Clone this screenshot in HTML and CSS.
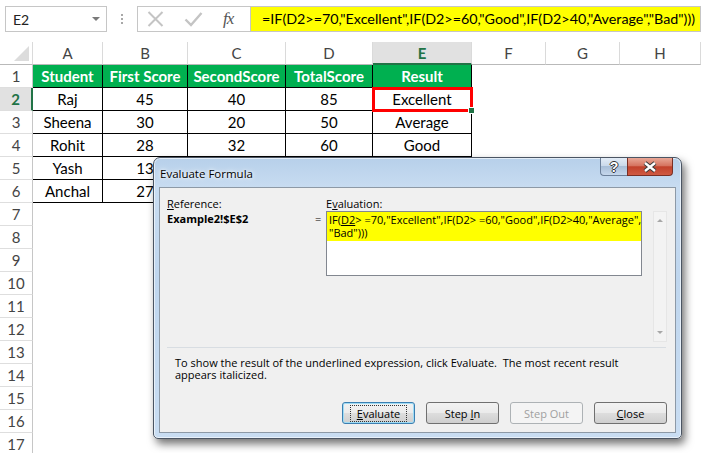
FILE: index.html
```html
<!DOCTYPE html>
<html>
  <head>
    <meta charset="utf-8" />
    <title>Evaluate Formula</title>
    <link rel="stylesheet" href="styles.css">
  </head>
  <body>
    <div id="formulaBar">
      <div class="name-box"><span>E2</span><span class="caret"></span></div>
      <div class="grip"><i></i><i></i><i></i></div>
      <div class="fx-buttons">
        <svg class="cancel" width="17" height="16" viewBox="0 0 17 16"><path d="M1.5 1 L15.5 15 M15.5 1 L1.5 15" stroke="#c4c4c4" stroke-width="2" fill="none"/></svg>
        <svg class="enter" width="19" height="16" viewBox="0 0 19 16"><path d="M1.5 8.5 L7 14 L17.5 2" stroke="#c4c4c4" stroke-width="2.4" fill="none"/></svg>
        <span class="fx">fx</span>
      </div>
      <div class="formula">=IF(D2&gt;=70,"Excellent",IF(D2&gt;=60,"Good",IF(D2&gt;40,"Average","Bad")))</div>
    </div>

    <div id="sheet">
      <div class="corner"><span></span></div>
      <div class="col-head">A</div>
      <div class="col-head">B</div>
      <div class="col-head">C</div>
      <div class="col-head">D</div>
      <div class="col-head active">E</div>
      <div class="col-head">F</div>
      <div class="col-head">G</div>
      <div class="col-head">H</div>

      <div class="row-head">1</div>
      <div class="cell head-cell">Student</div>
      <div class="cell head-cell">First Score</div>
      <div class="cell head-cell">SecondScore</div>
      <div class="cell head-cell">TotalScore</div>
      <div class="cell head-cell">Result</div>
      <div class="rest"></div>

      <div class="row-head active">2</div>
      <div class="cell">Raj</div>
      <div class="cell">45</div>
      <div class="cell">40</div>
      <div class="cell">85</div>
      <div class="cell selected">Excellent</div>
      <div class="rest"></div>

      <div class="row-head">3</div>
      <div class="cell">Sheena</div>
      <div class="cell">30</div>
      <div class="cell">20</div>
      <div class="cell">50</div>
      <div class="cell">Average</div>
      <div class="rest"></div>

      <div class="row-head">4</div>
      <div class="cell">Rohit</div>
      <div class="cell">28</div>
      <div class="cell">32</div>
      <div class="cell">60</div>
      <div class="cell">Good</div>
      <div class="rest"></div>

      <!-- C5:E6 sit under the dialog -->
      <div class="row-head">5</div>
      <div class="cell">Yash</div>
      <div class="cell">13</div>
      <div class="cell"></div>
      <div class="cell"></div>
      <div class="cell"></div>
      <div class="rest"></div>

      <div class="row-head">6</div>
      <div class="cell">Anchal</div>
      <div class="cell">27</div>
      <div class="cell"></div>
      <div class="cell"></div>
      <div class="cell"></div>
      <div class="rest"></div>

      <div class="row-head">7</div><div class="empty"></div>
      <div class="row-head">8</div><div class="empty"></div>
      <div class="row-head">9</div><div class="empty"></div>
      <div class="row-head">10</div><div class="empty"></div>
      <div class="row-head">11</div><div class="empty"></div>
      <div class="row-head">12</div><div class="empty"></div>
      <div class="row-head">13</div><div class="empty"></div>
      <div class="row-head">14</div><div class="empty"></div>
      <div class="row-head">15</div><div class="empty"></div>
      <div class="row-head">16</div><div class="empty"></div>
      <div class="row-head">17</div><div class="empty"></div>
    </div>

    <div id="evalDialog">
      <div class="title-bar">
        <span class="dlg-title">Evaluate Formula</span>
        <div class="caption-buttons">
          <span class="help">?</span>
          <span class="close">
            <svg width="16" height="12" viewBox="0 0 16 12"><path d="M3 2 L13 10 M13 2 L3 10" stroke="#3a3a3a" stroke-width="4.4" fill="none"/><path d="M3 2 L13 10 M13 2 L3 10" stroke="#fff" stroke-width="2.4" fill="none"/></svg>
          </span>
        </div>
      </div>
      <div class="client">
        <div class="fields">
          <div class="label"><u>R</u>eference:</div>
          <div></div>
          <div class="label">E<u>v</u>aluation:</div>
          <div></div>
          <div class="ref-value">Example2!$E$2</div>
          <div class="equals">=</div>
          <div class="eval-box">
            <div class="hl">IF(<u>D2</u>&gt; =70,"Excellent",IF(D2&gt; =60,"Good",IF(D2&gt;40,"Average",<br>"Bad")))</div>
          </div>
          <div class="scrollbar"><span class="up"></span><span class="down"></span></div>
        </div>
        <div class="note">To show the result of the underlined expression, click Evaluate.&nbsp; The most recent result<br>appears italicized.</div>
        <div class="buttons">
          <span class="btn default"><span class="focus"><u>E</u>valuate</span></span>
          <span class="btn"><span>Step <u>I</u>n</span></span>
          <span class="btn disabled"><span>Step Out</span></span>
          <span class="btn"><span><u>C</u>lose</span></span>
        </div>
      </div>
    </div>
  </body>
</html>
```

FILE: styles.css
```css
html {
  margin: 0px;
  padding: 0px;
}
body {
  margin: 0px;
  padding: 0px;
  width: 701px;
  height: 453px;
  overflow: hidden;
  position: relative;
  background-color: #fff;
  font-family: 'Lato', 'Liberation Sans', sans-serif;
  color: #000;
}

/* formula bar */
#formulaBar {
  display: flex;
  align-items: center;
  height: 26px;
  margin-top: 6px;
  padding-left: 5px;
}
.name-box {
  box-sizing: border-box;
  width: 102px;
  height: 26px;
  border: 1px solid #c6c6c6;
  display: flex;
  align-items: center;
  justify-content: space-between;
  padding: 0px 6px 0px 7px;
  font-size: 14px;
  color: #222;
}
.caret {
  width: 0px;
  height: 0px;
  border-left: 4px solid transparent;
  border-right: 4px solid transparent;
  border-top: 4px solid #7a7a7a;
}
.grip {
  width: 30px;
  display: flex;
  flex-direction: column;
  align-items: center;
  gap: 2px;
}
.grip i {
  width: 2px;
  height: 2px;
  background-color: #a8a8a8;
}
.fx-buttons {
  box-sizing: border-box;
  width: 113px;
  height: 26px;
  border: 1px solid #c6c6c6;
  border-right: none;
  display: flex;
  align-items: center;
  padding-left: 9px;
}
.fx-buttons .enter {
  margin-left: 20px;
}
.fx {
  margin-left: 20px;
  font-family: 'Liberation Serif', serif;
  font-style: italic;
  font-size: 17px;
  color: #555;
  letter-spacing: -1px;
}
.formula {
  flex: 1;
  box-sizing: border-box;
  height: 26px;
  background-color: #ffff00;
  border: 1px solid #c6c6c6;
  padding-left: 11px;
  line-height: 24px;
  font-size: 14.3px;
  white-space: nowrap;
  overflow: hidden;
}

/* sheet */
#sheet {
  margin-top: 10px;
  display: grid;
  grid-template-columns: 33px 70px 85px 98px 87px 99px 74px 74px 81px;
  grid-auto-rows: 23px;
}
#sheet > div {
  box-sizing: border-box;
}
.corner {
  border-right: 1px solid #dadada;
  border-bottom: 1px solid #b9b9b9;
  position: relative;
}
.corner span {
  position: absolute;
  right: 3px;
  bottom: 3px;
  width: 0px;
  height: 0px;
  border-left: 15px solid transparent;
  border-bottom: 15px solid #dcdcdc;
}
.col-head {
  border-right: 1px solid #dadada;
  border-bottom: 1px solid #b9b9b9;
  text-align: center;
  line-height: 22px;
  font-size: 15px;
  color: #444;
}
.col-head.active {
  background-color: #e1e1e1;
  color: #217346;
  font-weight: bold;
  border-bottom: 2px solid #217346;
}
.row-head {
  border-right: 1px solid #c6c6c6;
  border-bottom: 1px solid #dedede;
  text-align: center;
  line-height: 22px;
  font-size: 15px;
  color: #444;
}
.row-head.active {
  background-color: #e1e1e1;
  color: #217346;
  font-weight: bold;
  border-right: 2px solid #217346;
}
.cell {
  border-right: 1px solid #000;
  border-bottom: 1px solid #000;
  text-align: center;
  line-height: 22px;
  font-size: 15px;
  white-space: nowrap;
  overflow: hidden;
}
.cell.head-cell {
  background-color: #00b050;
  color: #fff;
  font-weight: bold;
}
.cell.selected {
  position: relative;
  overflow: visible;
  outline: 3px solid #ff0000;
  outline-offset: -2px;
}
.cell.selected::after {
  content: '';
  position: absolute;
  right: -4px;
  bottom: -4px;
  width: 5px;
  height: 5px;
  background-color: #217346;
  border: 1px solid #fff;
}
.rest {
  grid-column: span 3;
}
.empty {
  grid-column: span 8;
}

/* dialog */
#evalDialog {
  position: absolute;
  left: 153px;
  top: 157px;
  width: 529px;
  box-sizing: border-box;
  padding: 0px 5px 5px 5px;
  border: 1px solid #4b5563;
  border-radius: 7px 7px 5px 5px;
  background: linear-gradient(180deg, #b7d0ea 0px, #c8dcf1 30px, #bfd6ee 120px, #c9ddf2 100%);
  box-shadow: 3px 5px 9px rgba(0, 0, 0, 0.55), inset 0px 0px 0px 1px rgba(255, 255, 255, 0.6);
  font-family: 'Open Sans', 'Noto Sans', sans-serif;
  font-size: 11px;
  color: #000;
}
.title-bar {
  display: flex;
  height: 29px;
}
.dlg-title {
  padding-top: 8px;
  padding-left: 1px;
  font-size: 11.5px;
  text-shadow: 0px 0px 6px #fff, 0px 0px 3px #fff;
}
.caption-buttons {
  margin-left: auto;
  margin-right: 3px;
  display: flex;
  height: 18px;
}
.help, .close {
  box-sizing: border-box;
  height: 18px;
  border: 1px solid #6b7f99;
  border-top: none;
  display: flex;
  align-items: center;
  justify-content: center;
}
.help {
  width: 27px;
  border-radius: 0px 0px 0px 4px;
  border-right: none;
  background: linear-gradient(180deg, #e3ecf6 0%, #cbdaeb 45%, #a9bfd8 50%, #c5d7ec 100%);
  color: #fff;
  font-weight: bold;
  font-size: 14px;
  font-family: 'Liberation Sans', sans-serif;
  text-shadow: 1px 0px 0px #333, -1px 0px 0px #333, 0px 1px 0px #333, 0px -1px 0px #333;
}
.close {
  width: 46px;
  border-radius: 0px 0px 4px 0px;
  border-color: #7a2f24;
  background: linear-gradient(180deg, #e9a796 0%, #d67460 45%, #c2412b 52%, #cf5a42 100%);
}
.client {
  box-sizing: border-box;
  background-color: #f0f0f0;
  border: 1px solid #8d99a6;
  padding: 8px 8px 8px 7px;
}
.fields {
  display: grid;
  grid-template-columns: 146px 13px 316px 14px;
  grid-template-rows: 15px 131px;
}
.label {
  line-height: 15px;
}
.ref-value {
  font-weight: bold;
  line-height: 15px;
}
.equals {
  line-height: 15px;
  padding-left: 2px;
}
.eval-box {
  box-sizing: border-box;
  height: 65px;
  border: 1px solid #828790;
  background-color: #fff;
}
.eval-box .hl {
  background-color: #ffff00;
  padding: 1px 2px 2px 2px;
  line-height: 13px;
  white-space: nowrap;
}
.scrollbar {
  margin-left: 11px;
  width: 14px;
  height: 131px;
  box-sizing: border-box;
  border: 1px solid #e6e6e6;
  background-color: #f3f3f3;
  display: flex;
  flex-direction: column;
  justify-content: space-between;
  align-items: center;
  padding: 7px 0px;
}
.scrollbar span {
  width: 0px;
  height: 0px;
  border-left: 3px solid transparent;
  border-right: 3px solid transparent;
}
.scrollbar .up {
  border-bottom: 3px solid #a7a7a7;
}
.scrollbar .down {
  border-top: 3px solid #a7a7a7;
}
.note {
  margin-top: 5px;
  margin-right: 1px;
  border-top: 1px solid #d8dde2;
  padding-top: 9px;
  padding-left: 8px;
  line-height: 12px;
}
.buttons {
  margin-top: 21px;
  display: flex;
  justify-content: flex-end;
  gap: 11px;
}
.btn {
  box-sizing: border-box;
  width: 73px;
  height: 22px;
  border: 1px solid #707070;
  border-radius: 3px;
  background: linear-gradient(180deg, #f2f2f2 0%, #ebebeb 48%, #dddddd 52%, #cfcfcf 100%);
  display: flex;
  align-items: center;
  justify-content: center;
}
.btn.default {
  border-color: #3c7fb1;
  box-shadow: inset 0px 0px 0px 1px #9fdcf5;
}
.btn .focus {
  border: 1px dotted #333;
  padding: 1px 6px;
  line-height: 13px;
}
.btn.disabled {
  color: #a0a0a0;
  border-color: #adb2b5;
  background: #f4f4f4;
}
```
